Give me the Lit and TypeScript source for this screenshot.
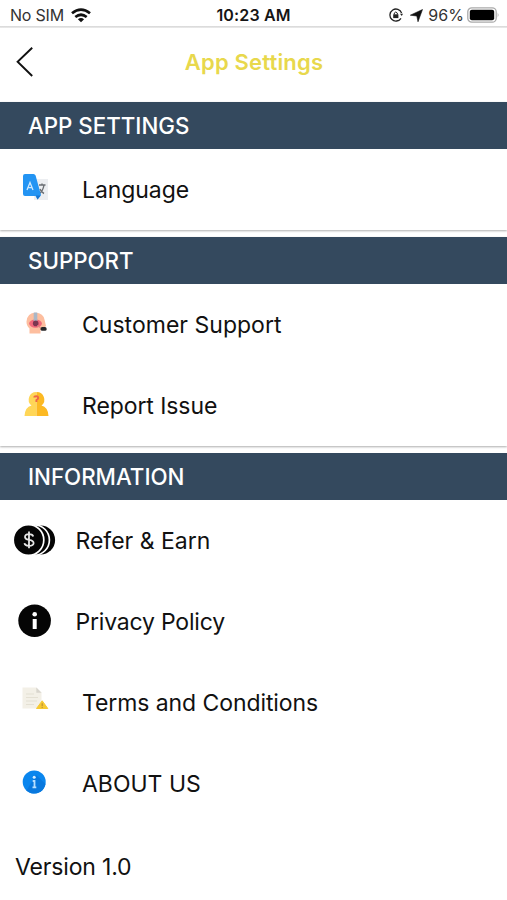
import { LitElement, html, css, svg } from "lit";
import { customElement, property } from "lit/decorators.js";

const icons: Record<string, unknown> = {
  language: svg`
    <rect x="34" y="19" width="14" height="21" fill="#eceef1"/>
    <path d="M39 25H45.5M42 23.5V25M44 25Q43 31 39 34M40 29Q41 32 44 33.5" stroke="#6b6f74" stroke-width="1.4" fill="none"/>
    <path d="M25 14H33.5Q35 14 35.6 15.5L41 35L37.5 39.5L35.5 36H25Q23 36 23 34V16Q23 14 25 14Z" fill="#2394f3"/>
    <path d="M36 35.5H40.8L37.5 39.5Z" fill="#1976d2"/>
    <path d="M27 30L30 22.5L33 30M28 27.6H32" stroke="#cfe9ff" stroke-width="1.3" fill="none"/>`,
  support: svg`
    <path d="M29.5 38.5V33.5Q26.3 30.5 26.5 26.5Q27.3 18 35.5 17.8Q43.5 18 44.6 25L46 31L44.5 32.5V35H40.5V38.5Z" fill="#fdbe9f"/>
    <ellipse cx="35.5" cy="28.6" rx="6.4" ry="4.2" fill="#f2687b"/>
    <path d="M35.5 17.5V26" stroke="#a9b7c7" stroke-width="3.6"/>
    <circle cx="35.7" cy="28.4" r="2.8" fill="#7c3550"/>
    <path d="M37 30.5L41.5 33.5" stroke="#d98780" stroke-width="1"/>
    <rect x="40.6" y="32" width="6" height="3.8" rx="1.6" fill="#282729"/>`,
  report: svg`
    <path d="M36.5 17A7.6 7.6 0 0 0 31.5 30.5Q25 32 24.5 41H36.5Z" fill="#ffd657"/>
    <path d="M36.5 17A7.6 7.6 0 0 1 41.5 30.5Q48 32 48.5 41H36.5Z" fill="#fcb923"/>
    <path d="M34.3 22.6Q34.3 21.3 36.3 21.3Q38.3 21.3 38.2 23Q38 24.3 36.4 25V27" stroke="#ee6548" stroke-width="1.9" fill="none"/>`,
  coins: svg`
    <circle cx="40.6" cy="30" r="14.5" fill="#050505"/>
    <circle cx="34.2" cy="30" r="15.2" fill="#050505" stroke="#fff" stroke-width="1.7"/>
    <circle cx="28.5" cy="30" r="15.3" fill="#050505" stroke="#fff" stroke-width="1.7"/>
    <path d="M33.2 26.5Q32.8 24.2 29 24.2Q25 24.3 25 27Q25 29.2 29 29.8Q33.7 30.5 33.6 33.2Q33.4 35.8 29 35.8Q24.8 35.7 24.5 33.2M29 21.5V38.3" stroke="#e6e6e6" stroke-width="1.8" fill="none"/>`,
  privacy: svg`
    <circle cx="34.6" cy="30.7" r="16.3" fill="#050505"/>
    <circle cx="34.7" cy="24.3" r="2.3" fill="#fff"/>
    <rect x="32.7" y="29" width="4" height="10" fill="#fff"/>`,
  terms: svg`
    <path d="M22.5 17.5H36.5L41.5 22.5V38.5H22.5Z" fill="#f3f0e7"/>
    <path d="M36.3 17.5L41.5 22.7H36.3Z" fill="#d8d5cd"/>
    <path d="M26 24H34M26 27.5H38M26 31H37M26 34.5H34" stroke="#e4e0d3" stroke-width="1.1"/>
    <path d="M42.2 30.8L47.8 38.5H36.5Z" fill="#f6c934" stroke="#f6c934" stroke-linejoin="round"/>
    <path d="M42.2 33.3V36.3M42.2 37V38" stroke="#b98f35" stroke-width="1.1"/>`,
  about: svg`
    <circle cx="34.2" cy="32" r="11.5" fill="#0a86ee"/>
    <path d="M26.5 40.5A11.5 11.5 0 0 0 45.5 34L36 25Z" fill="#0878de"/>
    <circle cx="34.2" cy="27.3" r="1.5" fill="#d7edff"/>
    <path d="M32.7 31H34.5V37.2M32.5 37.4H36.3" stroke="#b5deff" stroke-width="1.8" fill="none"/>`,
};

/* Vertical shift of each artwork inside its 80x60 box. */
const lift: Record<string, number> = {
  language: 0, support: 0, report: 1, coins: 1, privacy: 2, terms: 3, about: 4,
};

@customElement("section-header")
class SectionHeader extends LitElement {
  @property() label = "";
  static styles = css`
    :host { display: flex; align-items: center; height: 47px; padding: 0 0 1px 28px; box-sizing: border-box;
      background: #34495e; color: #fff; font-size: 22.3px; font-weight: 500; white-space: nowrap; }
  `;
  render() {
    return html`<span>${this.label}</span>`;
  }
}

@customElement("setting-row")
class SettingRow extends LitElement {
  @property() label = "";
  @property() icon = "";
  @property() spacing = "0";
  static styles = css`
    :host { display: flex; align-items: center; height: 81px; font-size: 23px; white-space: nowrap; }
    svg { width: 80px; height: 60px; flex: none; margin-right: 2px; }
    .wide svg { margin-right: -4.5px; }
    .row { display: flex; align-items: center; padding-top: 1px; }
  `;
  render() {
    const wide = this.icon === "coins" || this.icon === "privacy";
    return html`<div class="row ${wide ? "wide" : ""}">
      <svg viewBox="0 ${lift[this.icon] ?? 0} 80 60">${icons[this.icon]}</svg>
      <span style="letter-spacing:${this.spacing}px">${this.label}</span>
    </div>`;
  }
}

@customElement("app-root")
class AppRoot extends LitElement {
  static styles = css`
    :host { display: block; height: 900px; overflow: hidden; background: #fff; color: #111;
      font-family: Inter, "Liberation Sans", sans-serif; }
    .status { display: grid; grid-template-columns: 1fr auto 1fr; align-items: center; height: 27px;
      padding: 3px 7px 0 10px; box-sizing: border-box; font-size: 16px; color: #333; }
    .left, .right { display: flex; align-items: center; }
    .right { justify-content: flex-end; }
    .carrier { letter-spacing: -0.2px; margin-right: 7px; }
    .time { font-weight: 600; color: #151515; letter-spacing: 0.15px; margin-right: 3px; }
    .lock { margin-right: 7px; }
    .arrow { margin-right: 5px; }
    .percent { margin-right: 3px; letter-spacing: 0.1px; }
    .rule { height: 2px; background: linear-gradient(#d6d6d6, #ececec); margin-top: -1px; }
    .nav { display: grid; grid-template-columns: 60px 1fr 60px; align-items: center; height: 68px; padding-bottom: 6px; }
    .back { margin-left: 15px; }
    .title { text-align: center; color: #e8d84c; font-size: 22px; font-weight: 600; letter-spacing: 0.17px; padding-left: 1px; }
    .card { box-shadow: 0 1px 2px rgba(0, 0, 0, 0.32); margin-bottom: 7px; }
    .card.short { height: 128px; }
    .card.tall { height: 209px; }
    .version { height: 85px; display: flex; align-items: center; padding-left: 15px; font-size: 23px; letter-spacing: -0.17px; }
  `;
  render() {
    return html`
      <div class="status">
        <div class="left">
          <span class="carrier">No SIM</span>
          <svg width="20" height="15" viewBox="0 0 20 15" fill="none" stroke="#111" stroke-width="2.7">
            <path d="M1 5.3Q10-2.2 19 5.3"/><path d="M4.3 9Q10 4.5 15.7 9"/>
            <path d="M10 14.2L6.9 11.2Q10 8.8 13.1 11.2Z" fill="#111" stroke="none"/>
          </svg>
        </div>
        <span class="time">10:23 AM</span>
        <div class="right">
          <svg class="lock" width="14" height="14" viewBox="0 0 14 14" fill="none" stroke="#222" stroke-width="1.3">
            <path d="M12.6 5A6 6 0 1 0 12 10.3"/><path d="M11 5.8H14L12.8 8Z" fill="#222" stroke="none"/>
            <rect x="4.2" y="6.3" width="5.2" height="3.8" fill="#222" stroke="none"/><path d="M5.3 6.5V5Q6.8 2.9 8.3 5V6.5" stroke-width="1"/>
          </svg>
          <svg class="arrow" width="13" height="13" viewBox="0 0 13 13"><path d="M12.5.5L8 12.8L6.8 7L.3 6.2Z" fill="#111" stroke="#111" stroke-width=".6" stroke-linejoin="round"/></svg>
          <span class="percent">96%</span>
          <svg width="33" height="16" viewBox="0 0 33 16">
            <rect x=".8" y=".8" width="28.4" height="14.4" rx="4" fill="#fff" stroke="#aaa" stroke-width="1.3"/>
            <rect x="2.8" y="2.8" width="24.4" height="10.4" rx="2" fill="#000"/>
            <path d="M30.7 5.5Q32.5 8 30.7 10.5Z" fill="#aaa"/>
          </svg>
        </div>
      </div>
      <div class="rule"></div>
      <div class="nav">
        <svg class="back" width="20" height="32" viewBox="0 0 20 32"><path d="M17.2 1.8L2.6 15.8L17.2 30" fill="none" stroke="#111" stroke-width="1.9"/></svg>
        <span class="title">App Settings</span>
      </div>
      <div class="card short">
        <section-header label="APP SETTINGS"></section-header>
        <setting-row icon="language" label="Language" spacing="-0.08"></setting-row>
      </div>
      <div class="card tall">
        <section-header label="SUPPORT"></section-header>
        <setting-row icon="support" label="Customer Support" spacing="0.02"></setting-row>
        <setting-row icon="report" label="Report Issue" spacing="-0.08"></setting-row>
      </div>
      <section-header label="INFORMATION"></section-header>
      <setting-row icon="coins" label="Refer &amp; Earn"></setting-row>
      <setting-row icon="privacy" label="Privacy Policy" spacing="-0.2"></setting-row>
      <setting-row icon="terms" label="Terms and Conditions" spacing="-0.08"></setting-row>
      <setting-row icon="about" label="ABOUT US"></setting-row>
      <div class="version">Version 1.0</div>
    `;
  }
}
